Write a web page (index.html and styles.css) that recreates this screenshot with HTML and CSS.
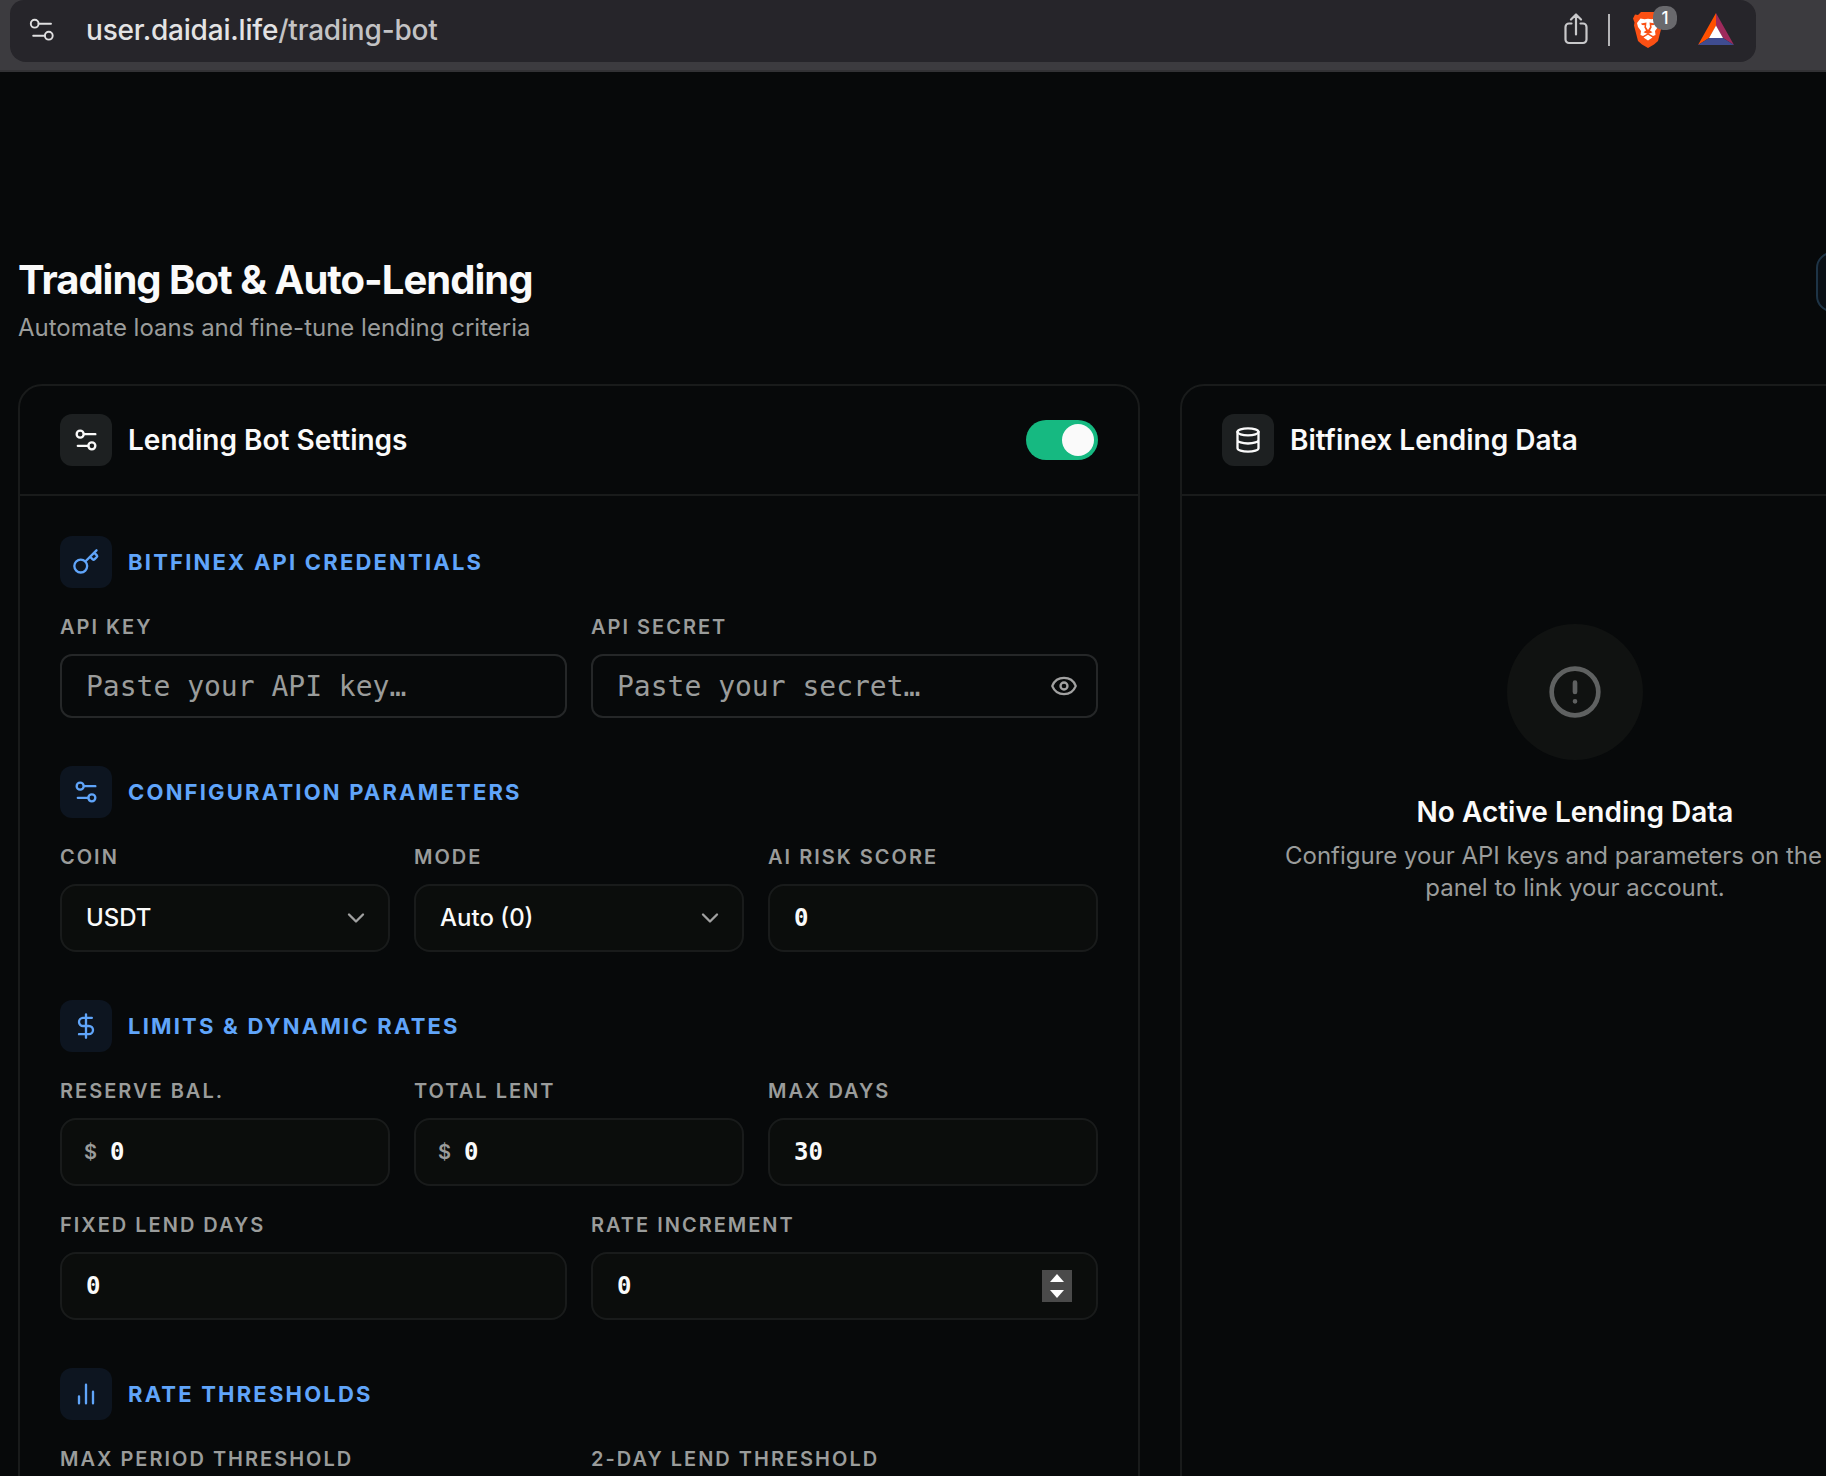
FILE: index.html
```html
<!DOCTYPE html>
<html lang="en">
<head>
<meta charset="utf-8">
<title>Trading Bot &amp; Auto-Lending</title>
<link rel="stylesheet" href="styles.css">
</head>
<body>
<svg class="sprite" aria-hidden="true">
  <symbol id="sliders" viewBox="0 0 24 24"><path d="M20 7h-9M14 17H5"/><circle cx="17" cy="17" r="3"/><circle cx="7" cy="7" r="3"/></symbol>
  <symbol id="chevron" viewBox="0 0 24 24"><path d="m6 9 6 6 6-6"/></symbol>
</svg>
<div class="toolbar">
  <div class="address">
    <svg class="site-icon" viewBox="0 0 24 24"><circle cx="4.7" cy="4.7" r="3.9"/><path d="M8.6 4.7H21M3.2 16.7h11.6"/><circle cx="18.8" cy="16.7" r="3.9"/></svg>
    <div class="url">user.daidai.life<span>/trading-bot</span></div>
    <svg class="share" viewBox="0 0 24 32"><path d="M7.5 10.5H5a3.500 3.500 0 0 0-3.500 3.500v12.500a3.500 3.500 0 0 0 3.500 3.500h14a3.500 3.500 0 0 0 3.500-3.500V14a3.500 3.500 0 0 0-3.500-3.500h-2.500M12 21.500V2M7 6.500 12 1.500l5 5"/></svg>
    <div class="bar-divider"></div>
    <div class="shield">
      <svg viewBox="0 0 30 36"><path fill="#fb5014" d="M8 0h14l3 3 3-.5 2 4-1.500 4 .5 3-4 15.500-4 3.500-6 3.500L9 32.500 5 29 1 13.500l.5-3L0 6.500l2-4L5 3z"/><path fill="#fff" d="M4 11 7.500 6.500l4 .8 3.500-.6 3.500.6 4-.8L26 11l-1 4-3 4 .5 4-2.500 1-5-2.800-5 2.800-2.500-1L8 19l-3-4zM15 22.800l4.500 2.700L15 28.500l-4.500-3z"/><path fill="#fb5014" d="m8 11.500 5.500-1-.5 4.500 2 3 2-3-.500-4.500 5.500 1-1 1.500-2.800.3.500 2-1.700 3.200 2.500 1.800-4.500 1.700-4.500-1.700L13 18.500l-1.700-3.200.5-2-2.800-.3z"/></svg>
      <span class="count">1</span>
    </div>
    <svg class="bat" viewBox="0 0 36 32"><path fill="#ff5000" d="M18 0v13L11 25 0 32z"/><path fill="#9e2a5c" d="M18 0v13l7 12 11 7z"/><path fill="#3f4c90" d="M0 32 11 25h14l11 7z"/><path fill="#fff" d="m18 12.500 7 12.500H11z"/></svg>
  </div>
</div>
<main>
  <header class="page-head">
    <div>
      <h1>Trading Bot &amp; Auto-Lending</h1>
      <p>Automate loans and fine-tune lending criteria</p>
    </div>
    <div class="head-action"></div>
  </header>
  <div class="columns">
    <section class="card">
      <div class="card-head">
        <div class="badge"><svg class="icon"><use href="#sliders"/></svg></div>
        <h2>Lending Bot Settings</h2>
        <div class="toggle"><i></i></div>
      </div>
      <div class="card-body">
        <div class="group">
          <div class="group-head"><div class="badge blue"><svg class="icon" viewBox="0 0 24 24"><path d="m15.500 7.500 2.300 2.300a1 1 0 0 0 1.400 0l2.100-2.100a1 1 0 0 0 0-1.400L19 4M21 2l-9.600 9.600"/><circle cx="7.500" cy="15.500" r="5.500"/></svg></div><h3>BITFINEX API CREDENTIALS</h3></div>
          <div class="row two">
            <div class="field"><label>API KEY</label><div class="control secret">Paste your API key…</div></div>
            <div class="field"><label>API SECRET</label><div class="control secret">Paste your secret…<svg class="icon end" viewBox="0 0 24 24"><path d="M2.062 12.348a1 1 0 0 1 0-.696 10.750 10.750 0 0 1 19.876 0 1 1 0 0 1 0 .696 10.750 10.750 0 0 1-19.876 0"/><circle cx="12" cy="12" r="3"/></svg></div></div>
          </div>
        </div>
        <div class="group">
          <div class="group-head"><div class="badge blue"><svg class="icon"><use href="#sliders"/></svg></div><h3>CONFIGURATION PARAMETERS</h3></div>
          <div class="row three">
            <div class="field"><label>COIN</label><div class="control select">USDT<svg class="icon end"><use href="#chevron"/></svg></div></div>
            <div class="field"><label>MODE</label><div class="control select">Auto (0)<svg class="icon end"><use href="#chevron"/></svg></div></div>
            <div class="field"><label>AI RISK SCORE</label><div class="control">0</div></div>
          </div>
        </div>
        <div class="group">
          <div class="group-head"><div class="badge blue"><svg class="icon" viewBox="0 0 24 24"><path d="M12 2v20M17 5H9.500a3.500 3.500 0 0 0 0 7h5a3.500 3.500 0 0 1 0 7H6"/></svg></div><h3>LIMITS &amp; DYNAMIC RATES</h3></div>
          <div class="row three">
            <div class="field"><label>RESERVE BAL.</label><div class="control money"><span>$</span>0</div></div>
            <div class="field"><label>TOTAL LENT</label><div class="control money"><span>$</span>0</div></div>
            <div class="field"><label>MAX DAYS</label><div class="control">30</div></div>
          </div>
          <div class="row two">
            <div class="field"><label>FIXED LEND DAYS</label><div class="control">0</div></div>
            <div class="field"><label>RATE INCREMENT</label><div class="control">0<svg class="stepper" viewBox="0 0 30 32"><path d="M8 12 15 4l7 8zM8 20l7 8 7-8z"/></svg></div></div>
          </div>
        </div>
        <div class="group">
          <div class="group-head"><div class="badge blue"><svg class="icon" viewBox="0 0 24 24"><path d="M18 20V10M12 20V4M6 20v-6"/></svg></div><h3>RATE THRESHOLDS</h3></div>
          <div class="row two">
            <div class="field"><label>MAX PERIOD THRESHOLD</label></div>
            <div class="field"><label>2-DAY LEND THRESHOLD</label></div>
          </div>
        </div>
      </div>
    </section>
    <section class="card">
      <div class="card-head">
        <div class="badge"><svg class="icon" viewBox="0 0 24 24"><ellipse cx="12" cy="5" rx="9" ry="3"/><path d="M3 5v14a9 3 0 0 0 18 0V5M3 12a9 3 0 0 0 18 0"/></svg></div>
        <h2>Bitfinex Lending Data</h2>
      </div>
      <div class="empty">
        <div class="empty-icon"><svg viewBox="0 0 24 24"><circle cx="12" cy="12" r="10"/><path d="M12 8v4M12 16h.01"/></svg></div>
        <h4>No Active Lending Data</h4>
        <p><span>Configure your API keys and parameters on the</span><br>panel to link your account.</p>
      </div>
    </section>
  </div>
</main>
</body>
</html>
```
FILE: styles.css
```css
* { box-sizing: border-box; }
body {
  margin: 0;
  width: 1826px;
  height: 1476px;
  overflow: hidden;
  background: #07090a;
  color: #fafafa;
  font-family: Inter, "Liberation Sans", sans-serif;
}
h1, h2, h3, h4, p { margin: 0; }
svg { display: block; flex: none; }
.sprite { position: absolute; width: 0; height: 0; }

.toolbar {
  height: 72px;
  padding: 0 70px 0 10px;
  background: #3c3b3f;
  border-bottom: 2px solid #323235;
}
.address {
  display: flex;
  align-items: center;
  height: 62px;
  padding: 0 22px 2px 20px;
  border-radius: 14px 16px 16px 16px;
  background: #26252a;
}
.site-icon { width: 24px; height: 24px; overflow: visible; fill: none; stroke: #e0e0e1; stroke-width: 1.9; stroke-linecap: round; margin-top: 2px; }
.url { margin-left: 32px; flex: 1; font-size: 28px; font-weight: 450; line-height: 40px; letter-spacing: -0.2px; color: #e3e3e4; white-space: nowrap; }
.url span { color: #c3c3c5; }
.share { width: 24px; height: 32px; fill: none; stroke: #c8c8ca; stroke-width: 2.2; stroke-linecap: round; stroke-linejoin: round; margin: 0 20px 3px 0; }
.bar-divider { width: 2px; height: 32px; background: #b5b5b7; margin-right: 23px; }
.shield { position: relative; width: 30px; height: 36px; margin-right: 35px; }
.shield svg { width: 30px; height: 36px; }
.count {
  position: absolute;
  left: 20px;
  top: -6px;
  width: 24px;
  height: 24px;
  border-radius: 10px;
  background: #69696d;
  font-size: 17px;
  font-weight: 500;
  line-height: 24px;
  text-align: center;
  color: #fff;
}
.bat { width: 36px; height: 32px; margin-bottom: 2px; }

main { padding: 180px 0 0 18px; }
.page-head { display: flex; width: 1952px; height: 132px; }
.page-head > div:first-child { width: 1798px; padding-top: 3px; }
h1 { font-size: 40px; font-weight: 700; line-height: 50px; letter-spacing: -1px; }
.page-head p { margin-top: 5px; font-size: 24px; line-height: 36px; color: #9a9c9b; }
.head-action { width: 154px; height: 60px; border: 2px solid #1e3446; border-radius: 16px; background: #0a1016; }

.columns { display: grid; grid-template-columns: 1122px 790px; gap: 40px; width: 1952px; height: 1400px; }
.card { border: 2px solid #191b1b; border-radius: 24px; }
.card-head { display: flex; align-items: center; gap: 16px; height: 110px; padding: 0 40px; border-bottom: 2px solid #191b1b; }
h2, h4 { font-size: 28px; font-weight: 600; line-height: 40px; }
.badge { display: flex; align-items: center; justify-content: center; width: 52px; height: 52px; border-radius: 12px; background: #1d2021; flex: none; }
.badge.blue { background: #0d1520; color: #60a5fa; }
.icon { width: 28px; height: 28px; fill: none; stroke: currentColor; stroke-width: 2; stroke-linecap: round; stroke-linejoin: round; }
.toggle { width: 72px; height: 40px; margin-left: auto; padding: 4px; border-radius: 20px; background: #16b981; }
.toggle i { display: block; width: 32px; height: 32px; margin-left: auto; border-radius: 50%; background: #fafafa; }

.card-body { display: flex; flex-direction: column; gap: 48px; padding: 40px; }
.group { display: flex; flex-direction: column; gap: 24px; }
.group-head { display: flex; align-items: center; gap: 16px; }
h3 { font-size: 22px; font-weight: 700; line-height: 32px; letter-spacing: 2.2px; color: #60a5fa; }
.row { display: grid; gap: 24px; }
.two { grid-template-columns: 1fr 1fr; }
.three { grid-template-columns: 1fr 1fr 1fr; }
label { display: block; margin-bottom: 12px; font-size: 20px; font-weight: 600; line-height: 30px; letter-spacing: 2px; color: #9a9c9b; }
.control {
  display: flex;
  align-items: center;
  height: 68px;
  padding: 0 24px;
  border: 2px solid #191b1b;
  border-radius: 16px;
  background: #0b0d0c;
  font: 700 24px "DejaVu Sans Mono", monospace;
}
.control.secret { height: 64px; padding-right: 18px; border-color: #252728; border-radius: 12px; background: none; color: #9a9c9b; font-size: 28px; font-weight: 400; }
.control.select { padding-right: 18px; font: 500 24px/66px Inter, sans-serif; padding-bottom: 1px; }
.end { margin-left: auto; color: #a1a1a1; }
.control.money { padding-left: 22px; }
.money span { width: 26px; font: 600 20px Inter, sans-serif; color: #9a9c9b; }
.stepper { width: 30px; height: 32px; margin-left: auto; background: #4a4a4a; fill: #fff; }

.empty { display: flex; flex-direction: column; align-items: center; padding-top: 128px; }
.empty-icon { display: flex; align-items: center; justify-content: center; width: 136px; height: 136px; border-radius: 50%; background: #101211; }
.empty-icon svg { width: 56px; height: 56px; fill: none; stroke: #5f6161; stroke-width: 2; stroke-linecap: round; }
.empty h4 { margin-top: 32px; }
.empty p { margin-top: 8px; font-size: 24px; line-height: 32px; text-align: center; color: #9a9c9b; white-space: nowrap; }
.empty p span { padding-right: 43px; }
```
